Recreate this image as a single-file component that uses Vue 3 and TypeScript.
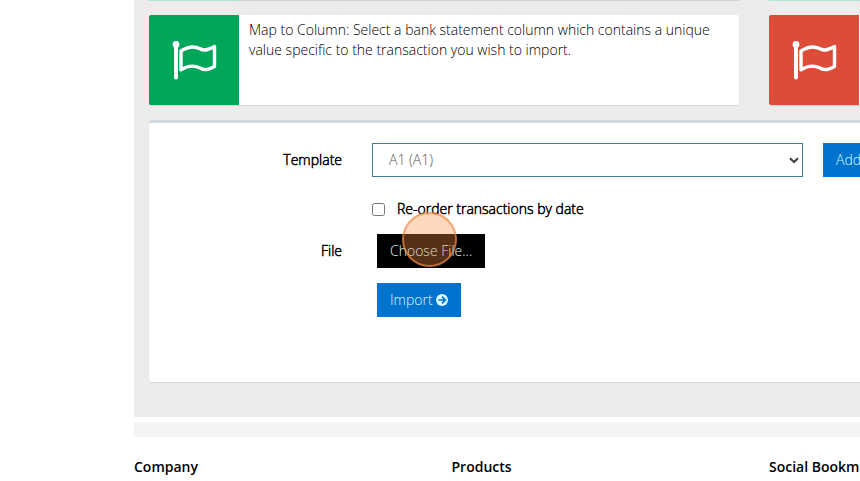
<script setup lang="ts">
import { ref } from 'vue'

interface InfoCard {
  tone: 'green' | 'red'
  text: string
}

const cards: InfoCard[] = [
  {
    tone: 'green',
    text: 'Map to Column: Select a bank statement column which contains a unique value specific to the transaction you wish to import.',
  },
  { tone: 'red', text: '' },
]

const footerHeadings: string[] = ['Company', 'Products', 'Social Bookmarks']
const template = ref('A1')
const reorder = ref(false)
</script>

<template>
  <div class="viewport">
    <div class="page">
      <main class="content">
        <div class="cards-end">
          <div class="card-end"></div>
          <div class="card-end"></div>
        </div>

        <section class="cards">
          <article v-for="card in cards" :key="card.tone" class="card">
            <div class="card-icon" :class="card.tone">
              <svg viewBox="0 0 46 42" width="46" height="42" fill="none" stroke="#fff" aria-hidden="true">
                <circle cx="5" cy="5.500" r="3.400" fill="#fff" stroke="none" />
                <path d="M5 6V38.500" stroke-width="4" stroke-linecap="round" />
                <path
                  d="M10 12C15.500 8.500 22 6 29 9.800C33.500 12.500 38 10.500 43.500 7.500V27.500C38 30.500 34 32 29 29C22 25.500 16 27 10 30.800Z"
                  stroke-width="3.400"
                  stroke-linejoin="round"
                />
              </svg>
            </div>
            <p class="card-text">{{ card.text }}</p>
          </article>
        </section>

        <form class="panel" @submit.prevent>
          <div class="row">
            <label class="label" for="template">Template</label>
            <div class="select-wrap">
              <select id="template" v-model="template" class="select">
                <option value="A1">A1 (A1)</option>
              </select>
              <svg class="chevron" viewBox="0 0 10 7" width="10" height="7" aria-hidden="true">
                <path d="M1 1.200L5 5L9 1.200" fill="none" stroke="#444" stroke-width="2.200" />
              </svg>
            </div>
            <button type="button" class="btn add">Add</button>
          </div>

          <div class="row check-row">
            <div class="check">
              <input id="reorder" v-model="reorder" type="checkbox" class="checkbox" />
              <label for="reorder" class="check-label">Re-order transactions by date</label>
            </div>
          </div>

          <div class="row file-row">
            <label class="label" for="choose-file">File</label>
            <div class="action">
              <button id="choose-file" type="button" class="btn choose">Choose File...</button>
              <span class="click-marker"></span>
            </div>
          </div>

          <div class="row import-row">
            <div class="action import-action">
              <button type="submit" class="btn">
                Import
                <svg viewBox="0 0 12 12" width="12" height="12" aria-hidden="true">
                  <circle cx="6" cy="6" r="6" fill="#d9fbff" />
                  <path d="M2.500 6H9M6 2.700L9.300 6L6 9.300" fill="none" stroke="#0073cf" stroke-width="1.700" />
                </svg>
              </button>
            </div>
          </div>
        </form>
      </main>

      <div class="divider"></div>

      <footer class="footer">
        <h4 v-for="heading in footerHeadings" :key="heading" class="footer-heading">{{ heading }}</h4>
      </footer>
    </div>
  </div>
</template>

<style>
html,
body {
  background: #fff;
}
</style>

<style scoped>
* {
  box-sizing: border-box;
}

.viewport {
  min-height: 100vh;
  padding-left: 134px;
  overflow: hidden;
}

.page {
  min-width: 1240px;
  font-family: 'Open Sans', 'Noto Sans', sans-serif;
  font-size: 14px;
  font-weight: 300;
  line-height: 20px;
  color: #000;
}

.content {
  padding: 0 15px 35px;
  background: #eeebed;
}

.cards-end,
.cards {
  display: grid;
  grid-template-columns: 1fr 1fr;
  gap: 30px;
}

.cards-end {
  margin-bottom: 14px;
}

.card-end {
  height: 1px;
  background: linear-gradient(90deg, #b1e8c9 90px, #d5d2d4 90px);
}

.card {
  display: flex;
  min-height: 90px;
  background: #fff;
  border-radius: 2px;
  box-shadow: 0 1px 1px rgba(0, 0, 0, 0.1);
}

.card-icon {
  display: flex;
  flex: 0 0 90px;
  align-items: center;
  justify-content: center;
  border-radius: 2px 0 0 2px;
}

.green {
  background: #00a65a;
}

.red {
  background: #dd4b39;
}

.card-text {
  margin: 0;
  padding: 5px 10px;
}

.panel {
  margin-top: 15px;
  padding: 20px 0 65px;
  background: #fff;
  border-top: 3px solid #d2d6de;
  border-radius: 3px;
  box-shadow: 0 1px 1px rgba(0, 0, 0, 0.1);
}

.row {
  display: grid;
  grid-template-columns: 193px 431px auto;
  column-gap: 30px;
  align-items: center;
}

.label {
  text-align: right;
}

.label,
.check-label {
  -webkit-text-stroke: 0.5px #000;
}

.select-wrap {
  position: relative;
}

.select {
  display: block;
  width: 100%;
  height: 34px;
  padding: 0 16px;
  appearance: none;
  background: #fff;
  border: 1px solid #467c94;
  border-radius: 0;
  font: inherit;
  color: #555;
}

.chevron {
  position: absolute;
  top: 14px;
  right: 4px;
  pointer-events: none;
}

.btn {
  display: inline-flex;
  gap: 3px;
  align-items: center;
  height: 34px;
  padding: 0 13px;
  background: #0073cf;
  border: 0;
  border-radius: 0;
  font: inherit;
  color: #d9fbff;
}

.add {
  justify-self: start;
  margin-left: -10px;
}

.check-row {
  margin-top: 22px;
}

.check {
  display: flex;
  grid-column: 2;
  gap: 12px;
  align-items: center;
}

.checkbox {
  width: 13px;
  height: 13px;
  margin: 0;
}

.file-row {
  margin-top: 15px;
}

.action {
  position: relative;
  display: flex;
  padding-left: 5px;
}

.choose {
  background: #000;
}

.click-marker {
  position: absolute;
  top: -22px;
  left: 30px;
  width: 55px;
  height: 55px;
  background: rgba(250, 141, 65, 0.34);
  border: 2px solid rgba(240, 140, 70, 0.65);
  border-radius: 50%;
  pointer-events: none;
}

.import-row {
  margin-top: 15px;
}

.import-action {
  grid-column: 2;
}

.divider {
  height: 15px;
  margin-top: 5px;
  background: #f1f3f5;
}

.footer {
  display: grid;
  grid-template-columns: repeat(4, 1fr);
  column-gap: 30px;
  padding-top: 20px;
}

.footer-heading {
  margin: 0;
  font-size: 14px;
  font-weight: 600;
  white-space: nowrap;
}
</style>
